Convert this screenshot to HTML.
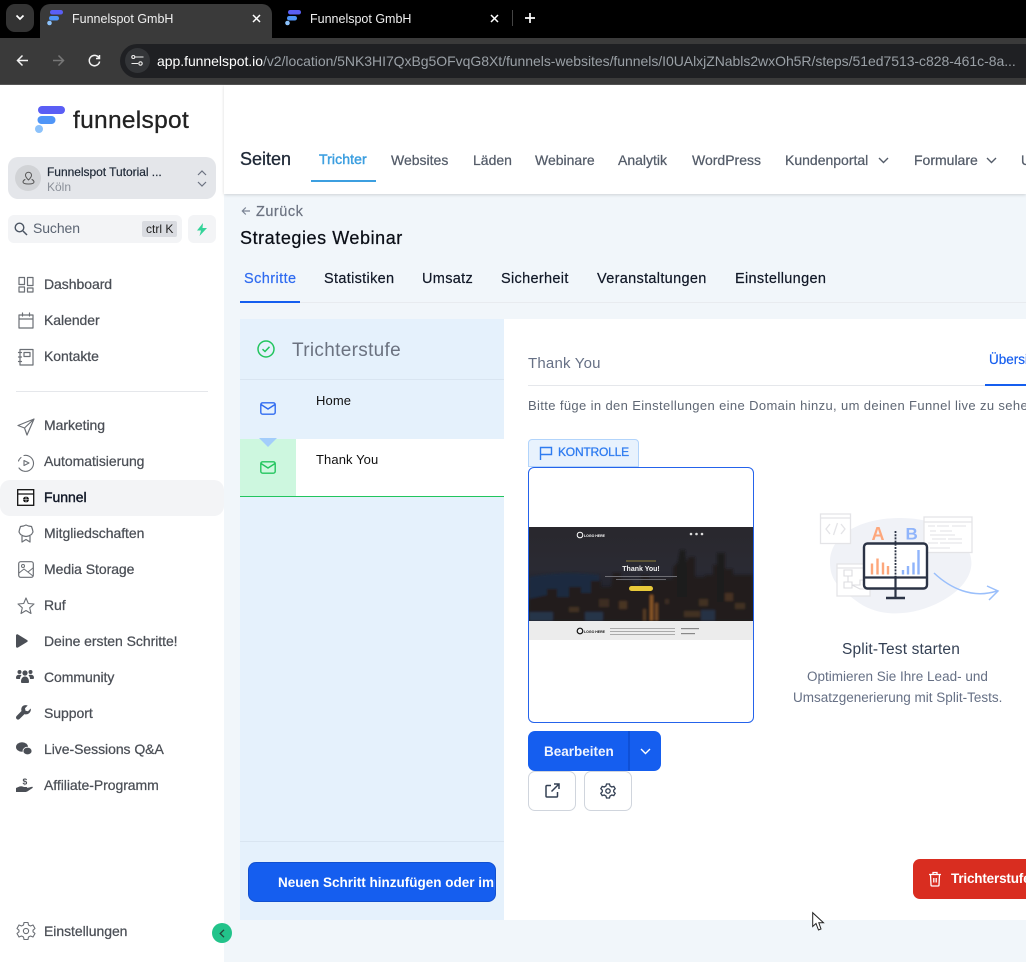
<!DOCTYPE html>
<html><head><meta charset="utf-8"><style>
*{box-sizing:border-box}
html,body{margin:0;padding:0;width:1026px;height:962px;overflow:hidden;background:#f1f6fa;font-family:"Liberation Sans",sans-serif}
#r{position:relative;width:1026px;height:962px;overflow:hidden}
.a,.t{position:absolute}
.t{white-space:nowrap;line-height:20px}
svg{position:absolute;overflow:visible}
.nav{font-size:14px;color:#4b4f56;left:44px;font-weight:500;-webkit-text-stroke:.25px #4b4f56;letter-spacing:-.05px}
.top{font-size:14px;color:#545c69;top:150px;-webkit-text-stroke:.25px #545c69}
.tab{font-size:14.5px;color:#111827;top:269px;-webkit-text-stroke:.2px #111827;letter-spacing:.32px}
.ic{fill:none;stroke:#6b6f75;stroke-width:1.4;stroke-linecap:round;stroke-linejoin:round}
</style></head><body><div id="r">

<!-- browser chrome -->
<div class="a" style="left:0;top:0;width:1026px;height:38px;background:#000"></div>
<div class="a" style="left:0;top:38px;width:1026px;height:47px;background:#3a3a3a;border-bottom:1px solid #555"></div>
<div class="a" style="left:6px;top:4px;width:28px;height:28px;border-radius:9px;background:#333"></div>
<svg style="left:15px;top:14px" width="10" height="8"><path d="M1.500 1.500L5 5L8.500 1.500" fill="none" stroke="#fff" stroke-width="1.700"/></svg>
<div class="a" style="left:40px;top:4px;width:232px;height:34px;border-radius:10px 10px 0 0;background:#3a3a3a"></div>
<svg style="left:47px;top:10px" width="18" height="16"><rect x="3" y="0" width="13" height="4.500" rx="2.200" fill="#5a5ef5"/><rect x="2" y="6" width="10" height="4.500" rx="2.200" fill="#4f95f7"/><circle cx="2.500" cy="13" r="2.300" fill="#8cc2fb"/></svg>
<div class="t" style="left:72px;top:9px;font-size:12.500px;color:#f0f0f0">Funnelspot GmbH</div>
<svg style="left:252px;top:14px" width="9" height="9"><path d="M1 1L8 8M8 1L1 8" stroke="#fff" stroke-width="1.500"/></svg>
<svg style="left:285px;top:10px" width="18" height="16"><rect x="3" y="0" width="13" height="4.500" rx="2.200" fill="#5a5ef5"/><rect x="2" y="6" width="10" height="4.500" rx="2.200" fill="#4f95f7"/><circle cx="2.500" cy="13" r="2.300" fill="#8cc2fb"/></svg>
<div class="t" style="left:310px;top:9px;font-size:12.500px;color:#f0f0f0">Funnelspot GmbH</div>
<svg style="left:490px;top:14px" width="9" height="9"><path d="M1 1L8 8M8 1L1 8" stroke="#fff" stroke-width="1.500"/></svg>
<div class="a" style="left:512px;top:10px;width:1px;height:16px;background:#444"></div>
<svg style="left:525px;top:13px" width="10" height="10"><path d="M5 0V10M0 5H10" stroke="#fff" stroke-width="1.700"/></svg>
<svg style="left:16px;top:54px" width="13" height="13"><path d="M12 6.500H1.500M6.500 1.500L1.500 6.500L6.500 11.500" fill="none" stroke="#f2f2f2" stroke-width="1.500"/></svg>
<svg style="left:52px;top:54px" width="13" height="13"><path d="M1 6.500H11.500M6.500 1.500L11.500 6.500L6.500 11.500" fill="none" stroke="#777" stroke-width="1.500"/></svg>
<svg style="left:88px;top:54px" width="13" height="13"><path d="M11 4A5.200 5.200 0 1 0 11.600 7.500M11.500 1V4.500H8" fill="none" stroke="#f2f2f2" stroke-width="1.500"/></svg>
<div class="a" style="left:120px;top:44px;width:906px;height:34px;border-radius:17px 0 0 17px;background:#1f2023"></div>
<div class="a" style="left:125px;top:48px;width:25px;height:25px;border-radius:13px;background:#333538"></div>
<svg style="left:131px;top:55px" width="13" height="11"><path d="M3.500 2H12.500M.5 8.500H7" stroke="#eee" stroke-width="1.100" fill="none"/><circle cx="2.300" cy="2" r="1.500" fill="#333" stroke="#eee" stroke-width="1.100"/><circle cx="9.500" cy="8.500" r="1.700" fill="#333" stroke="#eee" stroke-width="1.100"/></svg>
<div class="t" style="left:157px;top:51px;width:869px;overflow:hidden;font-size:14px;letter-spacing:-.04px;color:#fff">app.funnelspot.io<span style="color:#9aa0a6">/v2/location/5NK3HI7QxBg5OFvqG8Xt/funnels-websites/funnels/I0UAlxjZNabls2wxOh5R/steps/51ed7513-c828-461c-8a...</span></div>

<!-- sidebar -->
<div class="a" style="left:0;top:85px;width:224px;height:877px;background:#fff"></div>
<svg style="left:35px;top:105px" width="30" height="30"><rect x="3" y="1" width="27" height="8" rx="4" fill="#5a5ef5"/><rect x="2.500" y="11" width="18" height="8" rx="4" fill="#4f95f7"/><circle cx="4" cy="24" r="4" fill="#8cc2fb"/></svg>
<div class="t" style="left:73px;top:106px;font-size:24.500px;line-height:30px;color:#222;font-weight:500;-webkit-text-stroke:.3px #222;letter-spacing:.3px">funnelspot</div>

<div class="a" style="left:8px;top:157px;width:208px;height:42px;border-radius:10px;background:#e4e6ea"></div>
<div class="a" style="left:15px;top:165px;width:26px;height:26px;border-radius:13px;background:#d1d3d6"></div>
<svg style="left:22px;top:171px" width="13" height="14"><path class="ic" style="stroke:#555;stroke-width:1" d="M6.500 9C4.500 7 3.500 5.800 3.500 4.200A3 3 0 0 1 9.500 4.200C9.500 5.800 8.500 7 6.500 9ZM3 8.500C1.500 9.300 1 10 1 11C1 12.500 3.500 13 6.500 13C9.500 13 12 12.500 12 11C12 10 11.500 9.300 10 8.500"/></svg>
<div class="t" style="left:47px;top:162px;font-size:12px;color:#1f2937;-webkit-text-stroke:.2px #1f2937;letter-spacing:-.03px">Funnelspot Tutorial ...</div>
<div class="t" style="left:47px;top:177px;font-size:12px;color:#8a8f98">Köln</div>
<svg style="left:197px;top:170px" width="10" height="17"><path d="M1 5L5 1L9 5M1 12L5 16L9 12" fill="none" stroke="#6b7280" stroke-width="1.200"/></svg>

<div class="a" style="left:8px;top:215px;width:174px;height:28px;border-radius:6px;background:#f3f4f6"></div>
<svg style="left:14px;top:222px" width="14" height="14"><circle cx="5.500" cy="5.500" r="4.300" fill="none" stroke="#4b5563" stroke-width="1.400"/><path d="M9 9L13 13" stroke="#4b5563" stroke-width="1.500"/></svg>
<div class="t" style="left:33px;top:218px;font-size:14px;color:#5b6472;letter-spacing:-.1px">Suchen</div>
<div class="a" style="left:142px;top:221px;width:35px;height:16px;border-radius:2px;background:#d9dbe0"></div>
<div class="t" style="left:146px;top:219px;font-size:12px;color:#222">ctrl K</div>
<div class="a" style="left:188px;top:215px;width:28px;height:28px;border-radius:6px;background:#f3f4f6"></div>
<svg style="left:196px;top:223px" width="12" height="13"><path d="M7 0L1 7.500H5L3.500 13L11 5H6.500Z" fill="#34d399"/></svg>

<!-- nav -->
<div class="a" style="left:0;top:480px;width:224px;height:36px;border-radius:10px;background:#f3f4f6"></div>
<div class="a" style="left:16px;top:391px;width:192px;height:1px;background:#e5e7eb"></div>

<svg style="left:18px;top:276px" width="16" height="17"><path class="ic" d="M1 1.500H6.500V8.500H1ZM9.500 1.500H15V9.500H9.500ZM1 11H6.500V16H1ZM9.500 12H15V16H9.500Z" style="stroke-width:1.200"/></svg>
<div class="t nav" style="top:274px">Dashboard</div>
<svg style="left:18px;top:312px" width="16" height="17"><path class="ic" d="M1 3H15V16H1ZM1 7H15M4.500 1V4M11.500 1V4" style="stroke-width:1.200"/></svg>
<div class="t nav" style="top:310px">Kalender</div>
<svg style="left:17px;top:348px" width="18" height="18"><path class="ic" d="M3 1.500H16V17H3ZM1.500 4.500H4.500M1.500 9H4.500M1.500 13.500H4.500M7 4.500H13V8.500H7Z" style="stroke-width:1.200"/></svg>
<div class="t nav" style="top:346px">Kontakte</div>

<svg style="left:17px;top:418px" width="18" height="18"><path class="ic" d="M17 1L1 7.500L7.500 10L10 17ZM17 1L7.500 10" style="stroke-width:1.200"/></svg>
<div class="t nav" style="top:415px">Marketing</div>
<svg style="left:17px;top:454px" width="18" height="18"><path class="ic" d="M7 1.500A8 8 0 1 1 2 14M1.500 7A8 8 0 0 1 4 3.500M7 6.500L12 9L7 11.500Z" style="stroke-width:1.100"/></svg>
<div class="t nav" style="top:451px">Automatisierung</div>
<svg style="left:17px;top:489px" width="18" height="17"><rect x=".7" y=".7" width="16" height="15.600" fill="#fff" stroke="#111" stroke-width="1.300"/><path d="M.7 5H17" stroke="#111" stroke-width="1.300"/><circle cx="9" cy="10.500" r="3" fill="#111"/><path d="M9 7.500V13.500M6 10.500H12" stroke="#fff" stroke-width=".6"/></svg>
<div class="t nav" style="top:487px;color:#111827;-webkit-text-stroke:.4px #111827">Funnel</div>
<svg style="left:18px;top:524px" width="16" height="19"><path class="ic" d="M8 1L10.500 2L13.500 2.500L14.500 5.500L15 8L13.500 10.500L10.500 12L8 12.500L5.500 12L2.500 10.500L1 8L1.500 5.500L2.500 2.500L5.500 2ZM4 12V18L8 15.500L12 18V12" style="stroke-width:1.200"/></svg>
<div class="t nav" style="top:523px">Mitgliedschaften</div>
<svg style="left:18px;top:561px" width="16" height="17"><rect x=".7" y=".7" width="14.600" height="15.600" rx="2" class="ic" style="stroke-width:1.200"/><circle cx="5" cy="5" r="1.500" class="ic" style="stroke-width:1"/><path class="ic" d="M1 12L6 8L15 15M10 11L15 7" style="stroke-width:1"/></svg>
<div class="t nav" style="top:559px">Media Storage</div>
<svg style="left:17px;top:597px" width="18" height="18"><path class="ic" d="M9 1L11.300 6.500L17 7L12.700 10.800L14 16.500L9 13.500L4 16.500L5.300 10.800L1 7L6.700 6.500Z" style="stroke-width:1.100"/></svg>
<div class="t nav" style="top:595px">Ruf</div>
<svg style="left:16px;top:634px" width="12" height="14"><path d="M0 1.500C0 .5 1 0 2 .500L11 6C12 6.600 12 7.400 11 8L2 13.500C1 14 0 13.500 0 12.500Z" fill="#4b4f56"/></svg>
<div class="t nav" style="top:631px">Deine ersten Schritte!</div>
<svg style="left:16px;top:669px" width="18" height="15" fill="#4b4f56"><circle cx="3.500" cy="3" r="2"/><circle cx="14.500" cy="3" r="2"/><circle cx="9" cy="4" r="2.600"/><path d="M0 9C0 6.500 1.500 5.800 3.500 5.800C4.500 5.800 5 6 5.500 6.500C4.500 7.300 4 8.500 4 10H1C.4 10 0 9.600 0 9ZM18 9C18 6.500 16.500 5.800 14.500 5.800C13.500 5.800 13 6 12.500 6.500C13.500 7.300 14 8.500 14 10H17C17.600 10 18 9.600 18 9ZM5 13C5 9.500 6.500 7.500 9 7.500C11.500 7.500 13 9.500 13 13C13 13.600 12.600 14 12 14H6C5.400 14 5 13.600 5 13Z"/></svg>
<div class="t nav" style="top:667px">Community</div>
<svg style="left:16px;top:705px" width="15" height="15" fill="#4b4f56"><path d="M14.700 3.500L12 6.200L9.500 5.700L9 3.200L11.700.5C9.500-.4 7.300.2 6.200 1.600C5.200 2.900 5 4.500 5.500 6L.6 11C-.2 11.800-.2 13.200.6 14C1.400 14.800 2.700 14.800 3.500 14L8.500 9.100C10 9.700 11.700 9.400 13 8.300C14.400 7.100 15.200 5.300 14.700 3.500Z"/></svg>
<div class="t nav" style="top:703px">Support</div>
<svg style="left:16px;top:742px" width="16" height="14" fill="#4b4f56"><ellipse cx="6" cy="5" rx="6" ry="4.800"/><ellipse cx="11.500" cy="9" rx="4.500" ry="3.800" stroke="#fff" stroke-width=".8"/></svg>
<div class="t nav" style="top:739px">Live-Sessions Q&amp;A</div>
<svg style="left:16px;top:777px" width="17" height="16" fill="#4b4f56"><path d="M0 11L3.500 9.500C5 9 6.500 9.200 8 10H10.500C11.300 10 11.500 11.200 10.500 11.500H8L13 10.500L16 9.800C16.800 9.700 17 10.500 16.500 11L12 14C11 14.800 10 15 9 15H0Z"/><text x="6.500" y="7.500" font-size="8.500" font-weight="bold" font-family="Liberation Sans" fill="#4b4f56">$</text></svg>
<div class="t nav" style="top:775px">Affiliate-Programm</div>
<svg style="left:16px;top:921px" width="20" height="20"><path class="ic" d="M8 1.500H12L12.500 4L14.500 5L17 4L19 7.500L17 9.200V10.800L19 12.500L17 16L14.500 15L12.500 16L12 18.500H8L7.500 16L5.500 15L3 16L1 12.500L3 10.800V9.200L1 7.500L3 4L5.500 5L7.500 4Z" style="stroke-width:1.100"/><circle cx="10" cy="10" r="2.600" class="ic" style="stroke-width:1.100"/></svg>
<div class="t nav" style="top:921px">Einstellungen</div>
<div class="a" style="left:212px;top:923px;width:20px;height:20px;border-radius:10px;background:#22c38a"></div>
<svg style="left:219px;top:929px" width="6" height="9"><path d="M5 .8L1.200 4.500L5 8.200" fill="none" stroke="#24463a" stroke-width="1.300"/></svg>

<!-- top nav -->
<div class="a" style="left:224px;top:85px;width:802px;height:109px;background:#fff;box-shadow:0 1px 3px rgba(0,0,0,.15)"></div>
<div class="t" style="left:240px;top:149px;font-size:18px;color:#1f2937;-webkit-text-stroke:.3px #1f2937">Seiten</div>
<div class="t" style="left:319px;top:149px;font-size:14px;color:#3c9fe0;-webkit-text-stroke:.45px #3c9fe0;letter-spacing:.1px">Trichter</div>
<div class="a" style="left:311px;top:180px;width:65px;height:2px;background:#3c9fe0"></div>
<div class="t top" style="left:391px">Websites</div>
<div class="t top" style="left:473px">Läden</div>
<div class="t top" style="left:535px">Webinare</div>
<div class="t top" style="left:618px">Analytik</div>
<div class="t top" style="left:692px">WordPress</div>
<div class="t top" style="left:785px">Kundenportal</div>
<svg style="left:878px;top:157px" width="11" height="7"><path d="M1 1L5.500 5.500L10 1" fill="none" stroke="#545c69" stroke-width="1.400"/></svg>
<div class="t top" style="left:914px">Formulare</div>
<svg style="left:986px;top:157px" width="11" height="7"><path d="M1 1L5.500 5.500L10 1" fill="none" stroke="#545c69" stroke-width="1.400"/></svg>
<div class="t top" style="left:1021px;width:5px;overflow:hidden">U</div>

<!-- page head -->
<svg style="left:241px;top:206px" width="10" height="10"><path d="M9 5H1.500M4.800 1.500L1.300 5L4.800 8.500" fill="none" stroke="#7b8494" stroke-width="1.200"/></svg>
<div class="t" style="left:256px;top:202px;font-size:14.500px;color:#6b7280;-webkit-text-stroke:.2px #6b7280;letter-spacing:.5px">Zurück</div>
<div class="t" style="left:240px;top:228px;font-size:18px;color:#0b0f17;-webkit-text-stroke:.25px #0b0f17;letter-spacing:.56px">Strategies Webinar</div>
<div class="a" style="left:240px;top:302px;width:786px;height:1px;background:#e8ebef"></div>
<div class="a" style="left:240px;top:301px;width:60px;height:2px;background:#155eef"></div>
<div class="t tab" style="left:244px;color:#2f6bf0;-webkit-text-stroke:.2px #2f6bf0;letter-spacing:.42px">Schritte</div>
<div class="t tab" style="left:324px">Statistiken</div>
<div class="t tab" style="left:422px">Umsatz</div>
<div class="t tab" style="left:501px">Sicherheit</div>
<div class="t tab" style="left:597px">Veranstaltungen</div>
<div class="t tab" style="left:735px">Einstellungen</div>

<!-- left panel -->
<div class="a" style="left:240px;top:319px;width:264px;height:601px;background:#e5f1fc"></div>
<svg style="left:257px;top:340px" width="18" height="18"><circle cx="9" cy="9" r="8" fill="none" stroke="#22c55e" stroke-width="1.500"/><path d="M5.500 9.200L8 11.500L12.500 6.800" fill="none" stroke="#22c55e" stroke-width="1.500"/></svg>
<div class="t" style="left:292px;top:340px;font-size:19px;line-height:22px;color:#6b7280;letter-spacing:.32px">Trichterstufe</div>
<div class="a" style="left:240px;top:379px;width:264px;height:1px;background:#d9e5f1"></div>
<svg style="left:260px;top:402px" width="16" height="13"><rect x=".8" y=".8" width="14.400" height="11.400" rx="1.800" fill="none" stroke="#2f6bf0" stroke-width="1.400"/><path d="M1 2.500L8 7L15 2.500" fill="none" stroke="#2f6bf0" stroke-width="1.400"/></svg>
<div class="t" style="left:316px;top:391px;font-size:13px;color:#111;letter-spacing:.1px">Home</div>
<div class="a" style="left:240px;top:439px;width:56px;height:57px;background:#cdf7df"></div>
<div class="a" style="left:296px;top:439px;width:208px;height:57px;background:#fff"></div>
<div class="a" style="left:240px;top:496px;width:264px;height:1px;background:#22c55e"></div>
<svg style="left:259px;top:438px" width="18" height="10"><path d="M0 0H18L9 9Z" fill="#a3cdfb"/></svg>
<svg style="left:260px;top:461px" width="16" height="13"><rect x=".8" y=".8" width="14.400" height="11.400" rx="1.800" fill="none" stroke="#22c55e" stroke-width="1.400"/><path d="M1 2.500L8 7L15 2.500" fill="none" stroke="#22c55e" stroke-width="1.400"/></svg>
<div class="t" style="left:316px;top:450px;font-size:13px;color:#111;letter-spacing:.1px">Thank You</div>
<div class="a" style="left:240px;top:841px;width:264px;height:1px;background:#d9e5f1"></div>
<div class="a" style="left:248px;top:862px;width:248px;height:40px;border-radius:8px;background:#155eef;border:1px solid #1150d0;overflow:hidden"><div class="t" style="left:29px;top:10px;font-size:13.500px;font-weight:bold;color:#fff">Neuen Schritt hinzufügen oder importieren</div></div>

<!-- main panel -->
<div class="a" style="left:504px;top:319px;width:522px;height:601px;background:#fff"></div>
<div class="t" style="left:528px;top:354px;font-size:15px;color:#667085;letter-spacing:.2px">Thank You</div>
<div class="t" style="left:989px;top:350px;width:37px;overflow:hidden;font-size:13.500px;color:#155eef;-webkit-text-stroke:.2px #155eef">Übersicht</div>
<div class="a" style="left:528px;top:385px;width:498px;height:1px;background:#e5e7eb"></div>
<div class="a" style="left:985px;top:384px;width:41px;height:2px;background:#155eef"></div>
<div class="t" style="left:528px;top:396px;width:498px;overflow:hidden;font-size:13px;color:#5f6774;letter-spacing:.37px">Bitte füge in den Einstellungen eine Domain hinzu, um deinen Funnel live zu sehen.</div>

<div class="a" style="left:528px;top:439px;width:111px;height:28px;border:1px solid #b2d4fb;border-radius:4px 4px 0 0;background:#e8f2fd"></div>
<svg style="left:539px;top:446px" width="14" height="15"><path d="M1.500 14V1.500H12.500V8.500H1.500" fill="none" stroke="#2f7cf0" stroke-width="1.400"/></svg>
<div class="t" style="left:558px;top:442px;font-size:12px;color:#2f7cf0;-webkit-text-stroke:.3px #2f7cf0;letter-spacing:-.2px">KONTROLLE</div>

<div class="a" style="left:528px;top:467px;width:226px;height:256px;border:1px solid #2563eb;border-radius:6px;background:#fff;overflow:hidden">
 <svg style="left:0;top:59px" width="224" height="94" viewBox="0 0 224 94">
  <defs>
   <linearGradient id="g" x1="0" y1="0" x2="0" y2="1"><stop offset="0" stop-color="#29282d"/><stop offset=".45" stop-color="#2a2a33"/><stop offset=".7" stop-color="#21222c"/><stop offset="1" stop-color="#1e1a1e"/></linearGradient>
   <filter id="b"><feGaussianBlur stdDeviation="1"/></filter>
  </defs>
  <rect width="224" height="94" fill="url(#g)"/>
  <g filter="url(#b)">
   <path d="M0 50C20 46 45 45 70 48V80H0Z" fill="#1b2a40"/>
   <path d="M0 72L18 68V62H28V70H40V60H52V66H62V54H72V60H82L84 46H92V52H100L104 58H112V48H120V52H144V40L148 36H156L160 30H166V50H176V48H184V38H190V26H196V42H204V48H224V94H0Z" fill="#211f1f"/>
   <path d="M148 40L151 23H156L158 45V70H148ZM188 26H195V75H188Z" fill="#1a1a1f"/>
   <g fill="#a8662a">
    <rect x="121" y="68" width="3" height="26" opacity=".8"/><rect x="126" y="76" width="3" height="18" opacity=".6"/>
    <rect x="114" y="82" width="3" height="12" opacity=".4"/><rect x="136" y="72" width="4" height="5" opacity=".22"/>
    <rect x="196" y="66" width="8" height="8" opacity=".28"/><rect x="170" y="72" width="9" height="7" opacity=".25"/>
    <rect x="70" y="72" width="10" height="8" opacity=".22"/><rect x="90" y="74" width="8" height="8" opacity=".3"/>
    <rect x="206" y="76" width="10" height="6" opacity=".25"/><rect x="40" y="80" width="10" height="5" opacity=".25"/>
    <rect x="155" y="84" width="16" height="6" opacity=".25"/>
   </g>
   <g fill="#2a4a74">
    <rect x="0" y="85" width="24" height="9" opacity=".5"/><rect x="56" y="85" width="18" height="9" opacity=".5"/><rect x="172" y="83" width="14" height="11" opacity=".45"/>
   </g>
  </g>
  <circle cx="51" cy="8" r="2.800" fill="none" stroke="#fff" stroke-width="1"/>
  <text x="55" y="10" font-size="3.500" font-weight="bold" fill="#fff" font-family="Liberation Sans">LOGO HERE</text>
  <circle cx="162" cy="7" r="1.300" fill="#ddd"/><circle cx="167.500" cy="7" r="1.300" fill="#ddd"/><circle cx="173" cy="7" r="1.300" fill="#ddd"/>
  <rect x="97" y="33.500" width="30" height="1" fill="#8f7f3a"/>
  <text x="112" y="44" font-size="7" font-weight="bold" fill="#f2f2f2" text-anchor="middle" font-family="Liberation Sans">Thank You!</text>
  <rect x="76" y="49" width="72" height="1" fill="#6e6e74"/><rect x="87" y="52" width="50" height="1" fill="#66666c"/>
  <rect x="100" y="59" width="24" height="5" rx="2.500" fill="#e8c93a"/>
 </svg>
 <svg style="left:0;top:153px" width="224" height="19" viewBox="0 0 224 19">
  <rect width="224" height="19" fill="#ececec"/>
  <circle cx="51" cy="10" r="2.800" fill="none" stroke="#111" stroke-width="1.200"/>
  <text x="55" y="12" font-size="3.500" font-weight="bold" fill="#111" font-family="Liberation Sans">LOGO HERE</text>
  <rect x="81" y="7" width="65" height="1" fill="#aaa"/><rect x="81" y="10" width="65" height="1" fill="#aaa"/><rect x="81" y="13" width="65" height="1" fill="#aaa"/>
  <rect x="152" y="7" width="18" height="1.200" fill="#888"/><rect x="152" y="12" width="14" height="1.200" fill="#888"/>
 </svg>
</div>

<!-- illustration -->
<svg style="left:800px;top:500px" width="226" height="130" viewBox="0 0 226 130">
 <path d="M30 62C30 35 60 18 100 18C125 18 150 25 165 45C178 62 172 85 140 102C115 115 80 120 55 100C38 87 30 80 30 62Z" fill="#f0f2f7"/>
 <g fill="#fff" stroke="#e4e4e7" stroke-width="1.300">
  <rect x="20.500" y="14" width="30" height="29.500"/><rect x="124" y="17" width="48" height="35.500"/><rect x="37" y="64" width="33" height="32"/>
 </g>
 <path d="M20.500 18H50.500M124 22H172M37 68H70" stroke="#e4e4e7" stroke-width="1.200" fill="none"/>
 <path d="M30 24L26 29L30 34M41 24L45 29L41 34M37.500 23L33.500 35" stroke="#e4e4e7" stroke-width="1.300" fill="none"/>
 <path d="M128 26H135M137 26H149M152 26H166M130 31H136M140 31H152M130 35H155M132 39H146M148 39H162M128 43H138M140 43H162M130 48H150" stroke="#e8e8ea" stroke-width="1.200" fill="none"/>
 <path d="M44 70H52V76H44ZM44 88H52V82H44ZM48 76V82M52 85H60V80H67V89H60Z" stroke="#dcdce0" stroke-width="1.100" fill="#fff"/>
 <rect x="64" y="43.500" width="63" height="45" rx="3.500" fill="#fff" stroke="#2b3345" stroke-width="2.400"/>
 <path d="M64 77.500H127" stroke="#2b3345" stroke-width="2.200"/>
 <path d="M95.500 31V76" stroke="#2b3345" stroke-width="1.800" stroke-dasharray="2 1.200"/><path d="M95.500 76V98" stroke="#2b3345" stroke-width="2.200"/>
 <path d="M86 98H105" stroke="#2b3345" stroke-width="2.400"/>
 <path d="M72 74.500V63.500M77.500 74.500V58.500M83 74.500V62.500M88 74.500V66" stroke="#fda77c" stroke-width="2.400"/>
 <path d="M103 74.500V70M108 74.500V66M113.500 74.500V62.500M118.500 74.500V50" stroke="#8fb4fb" stroke-width="2.400"/>
 <text x="71.500" y="40" font-size="18" font-weight="bold" fill="#fda77c" font-family="Liberation Sans">A</text>
 <text x="105.500" y="39.500" font-size="17" font-weight="bold" fill="#8fb4fb" font-family="Liberation Sans">B</text>
 <path d="M134 73C150 88 172 99 197 91M187 86L198 91L189 100" fill="none" stroke="#9abffb" stroke-width="1.500"/>
</svg>
<div class="t" style="left:842px;top:640px;font-size:15.500px;color:#344054;letter-spacing:.14px">Split-Test starten</div>
<div class="t" style="left:807px;top:667px;font-size:13.500px;color:#667085">Optimieren Sie Ihre Lead- und</div>
<div class="t" style="left:793px;top:688px;font-size:13.500px;color:#667085">Umsatzgenerierung mit Split-Tests.</div>

<!-- buttons -->
<div class="a" style="left:528px;top:731px;width:133px;height:40px;border-radius:7px;background:#155eef"></div>
<div class="a" style="left:628px;top:731px;width:2px;height:40px;background:#0f50d6"></div>
<div class="t" style="left:544px;top:741px;font-size:13.500px;font-weight:bold;color:#f0f4ff;line-height:21px">Bearbeiten</div>
<svg style="left:640px;top:748px" width="11" height="7"><path d="M1 1L5.500 5.500L10 1" fill="none" stroke="#fff" stroke-width="1.400"/></svg>
<div class="a" style="left:528px;top:771px;width:48px;height:40px;border-radius:7px;background:#fff;border:1px solid #d0d5dd"></div>
<svg style="left:545px;top:783px" width="15" height="15"><path d="M6 2.500H2A1 1 0 0 0 1 3.500V13A1 1 0 0 0 2 14H11.500A1 1 0 0 0 12.500 13V9M9 1H14V6M14 1L6.500 8.500" fill="none" stroke="#344054" stroke-width="1.500"/></svg>
<div class="a" style="left:584px;top:771px;width:48px;height:40px;border-radius:7px;background:#fff;border:1px solid #d0d5dd"></div>
<svg style="left:600px;top:783px" width="16" height="16"><path d="M6.500 1H9.500L10 3L11.800 4L13.800 3.400L15.200 5.800L13.700 7.200V8.800L15.200 10.200L13.800 12.600L11.800 12L10 13L9.500 15H6.500L6 13L4.200 12L2.200 12.600L.8 10.200L2.300 8.800V7.200L.8 5.800L2.200 3.400L4.200 4L6 3Z" fill="none" stroke="#344054" stroke-width="1.300"/><circle cx="8" cy="8" r="2.200" fill="none" stroke="#344054" stroke-width="1.300"/></svg>

<div class="a" style="left:913px;top:859px;width:113px;height:40px;border-radius:7px 0 0 7px;background:#d92d20;overflow:hidden"><div class="t" style="left:38px;top:10px;font-size:13.500px;font-weight:bold;color:#fff;letter-spacing:-.18px">Trichterstufe löschen</div></div>
<svg style="left:928px;top:871px" width="14" height="16"><path d="M1 3.500H13M2.500 3.500L3 14C3 14.600 3.500 15 4 15H10C10.500 15 11 14.600 11 14L11.500 3.500M5 3.500V1.500H9V3.500M5.800 7V11.500M8.200 7V11.500" fill="none" stroke="#fff" stroke-width="1.300"/></svg>

<!-- cursor -->
<svg style="left:812px;top:912px" width="13" height="20"><path d="M.7.700V14.500L4 11.500L6.500 18L9 17L6.800 10.800H11.500Z" fill="#fff" stroke="#222" stroke-width="1"/></svg>

</div></body></html>
